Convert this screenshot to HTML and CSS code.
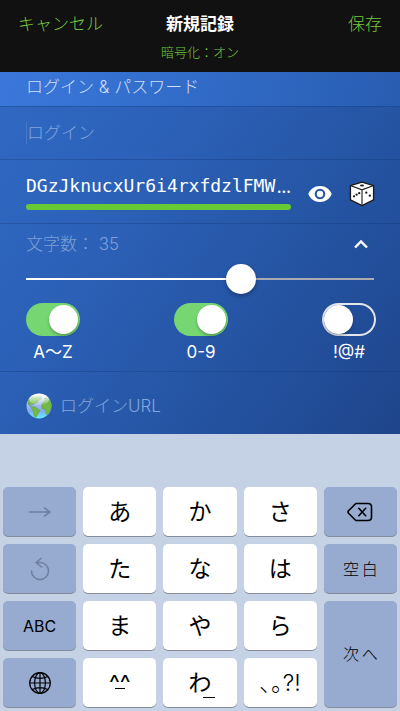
FILE: index.html
```html
<!DOCTYPE html>
<html lang="ja">
<head>
<meta charset="utf-8">
<meta name="viewport" content="width=device-width, initial-scale=1">
<title>新規記録</title>
<link rel="stylesheet" href="styles.css">
</head>
<body>
<header class="header">
  <div class="nav">
    <button class="nav-btn" type="button">キャンセル</button>
    <h1 class="title">新規記録</h1>
    <button class="nav-btn nav-save" type="button">保存</button>
  </div>
  <p class="status">暗号化：オン</p>
</header>
<main class="form">
  <h2 class="section-title">ログイン &amp; パスワード</h2>
  <div class="row row-login">
    <input class="field field-focus" type="text" placeholder="ログイン" aria-label="ログイン">
  </div>
  <div class="row row-password">
    <div class="password">
      <div class="password-line">
        <input class="password-input" type="text" value="DGzJknucxUr6i4rxfdzlFMW" aria-label="パスワード"><span>…</span>
      </div>
      <div class="strength"></div>
    </div>
    <button class="icon-btn" type="button" aria-label="表示">
      <svg width="24" height="18" viewBox="0 0 24 18"><path fill="#fff" fill-rule="evenodd" d="M12 1C6.500 1 2.200 4.200.3 9c1.900 4.800 6.200 8 11.700 8s9.800-3.200 11.700-8C21.800 4.200 17.500 1 12 1zm0 2.700a5.300 5.300 0 1 1 0 10.600a5.300 5.300 0 0 1 0-10.600z"/><circle cx="12" cy="9" r="3.200" fill="#fff"/></svg>
    </button>
    <button class="icon-btn" type="button" aria-label="生成">
      <svg width="26" height="26" viewBox="0 0 26 26"><path fill="#fff" stroke="#1b1b1b" stroke-width="1.400" stroke-linejoin="round" d="M13 1.200L24.600 4.600V18.900L13 24.700L1.400 18.900V4.600z"/><path fill="none" stroke="#1b1b1b" stroke-width="1.100" d="M1.400 4.600L13 8.800L24.600 4.600M13 8.800V24.700"/><g fill="#1b1b1b"><ellipse cx="13" cy="4.600" rx="2" ry="1"/><circle cx="5" cy="15.300" r="1.150"/><circle cx="7.600" cy="13.700" r="1.150"/><circle cx="10.200" cy="12.200" r="1.150"/><circle cx="17.300" cy="11.700" r="1.150"/><circle cx="20.800" cy="14.700" r="1.150"/></g></svg>
    </button>
  </div>
  <div class="row options">
    <div class="length">
      <label for="length">文字数： 35</label>
      <button class="icon-btn" type="button" aria-label="閉じる">
        <svg width="26" height="20" viewBox="0 0 26 20"><path fill="none" stroke="#fff" stroke-width="2.400" d="M7 13.500L13 7.500L19 13.500"/></svg>
      </button>
    </div>
    <input class="slider" id="length" type="range" min="8" max="51" value="35">
    <div class="switches">
      <label class="switch"><input type="checkbox" checked><span>A〜Z</span></label>
      <label class="switch"><input type="checkbox" checked><span>0-9</span></label>
      <label class="switch"><input type="checkbox"><span>!@#</span></label>
    </div>
  </div>
  <div class="row row-url">
    <svg width="26" height="26" viewBox="0 0 26 26" aria-hidden="true">
      <defs>
        <linearGradient id="sea" x1="0" y1="0" x2="0" y2="1"><stop offset="0" stop-color="#e8eff5"/><stop offset=".4" stop-color="#a5bdf2"/><stop offset=".7" stop-color="#82aaf2"/><stop offset="1" stop-color="#62f2ff"/></linearGradient>
        <linearGradient id="shine" x1="0" y1="0" x2="0" y2="1"><stop offset="0" stop-color="#fff" stop-opacity=".95"/><stop offset="1" stop-color="#fff" stop-opacity=".1"/></linearGradient>
      </defs>
      <circle cx="13" cy="13" r="12.500" fill="url(#sea)"/>
      <path fill="#72b842" stroke="#539b3e" stroke-width=".4" d="M2.500 7L7 3.500L14.500 3L16 5.500L12.500 7.500L11 10L8 10.500L7.500 12L5 11L3 12L6.500 13.500L10 14.500L14 17.500L12 20.500L10 24.500L8 23L7.500 19L5.500 16L5 13.500L2 11zM16.500 10L19.500 7L18 5.500L21 4.500L24.500 9L25.500 13.500L24 18L21.500 22L20 21L19.500 17L16 15.500L15.500 12.500z"/>
      <ellipse cx="13" cy="6.500" rx="10" ry="5.800" fill="url(#shine)"/>
    </svg>
    <input class="field" type="url" placeholder="ログインURL" aria-label="ログインURL">
  </div>
</main>
<section class="keyboard" aria-label="キーボード">
  <button class="key key-dark" type="button" aria-label="次候補"><svg width="24" height="16" viewBox="0 0 24 16"><path class="muted" d="M1.500 8H22M16.500 4L22 8L16.500 12"/></svg></button>
  <button class="key" type="button">あ</button>
  <button class="key" type="button">か</button>
  <button class="key" type="button">さ</button>
  <button class="key key-dark" type="button" aria-label="削除"><svg width="26" height="20" viewBox="0 0 26 20"><path class="ink" d="M8.800 1.500H21Q24.500 1.500 24.500 5V15Q24.500 18.500 21 18.500H8.800L1.500 11.200Q.5 10 1.500 8.800zM11.800 6.300L18.700 13.700M18.700 6.300L11.800 13.700"/></svg></button>
  <button class="key key-dark" type="button" aria-label="戻す"><svg width="20" height="24" viewBox="0 0 20 24"><path class="muted" d="M1.500 14A8.500 8.500 0 1 0 10 5.500H6M11 1.500L6 5.500L11.500 10"/></svg></button>
  <button class="key" type="button">た</button>
  <button class="key" type="button">な</button>
  <button class="key" type="button">は</button>
  <button class="key key-dark key-word" type="button">空&#8201;白</button>
  <button class="key key-dark key-latin" type="button">ABC</button>
  <button class="key" type="button">ま</button>
  <button class="key" type="button">や</button>
  <button class="key" type="button">ら</button>
  <button class="key key-dark key-word key-next" type="button">次&#8201;へ</button>
  <button class="key key-dark" type="button" aria-label="地球儀"><svg width="24" height="24" viewBox="0 0 24 24"><g class="globe"><circle cx="12" cy="12" r="10.300"/><ellipse cx="12" cy="12" rx="5.400" ry="10.300"/><path d="M12 1.700V22.300M1.700 12H22.300M4.200 5.500Q12 9.200 19.800 5.500M4.200 18.500Q12 14.800 19.800 18.500"/></g></svg></button>
  <button class="key key-face" type="button">^^</button>
  <button class="key key-wa" type="button">わ</button>
  <button class="key key-marks" type="button">､｡?!</button>
</section>
</body>
</html>
```
FILE: styles.css
```css
* {
  box-sizing: border-box;
}

body {
  margin: 0;
  min-height: 100vh;
  display: flex;
  flex-direction: column;
  background: #c5d2e5;
  font-family: Inter, "Noto Sans CJK JP", sans-serif;
  font-size: 17px;
  line-height: 24px;
}

button,
input {
  margin: 0;
  padding: 0;
  border: 0;
  background: none;
  color: inherit;
  font: inherit;
  outline: none;
}

svg {
  display: block;
}

.header {
  height: 72px;
  padding: 12px 18px 0;
  background: #111;
  color: #78c83c;
}

.nav {
  display: grid;
  grid-template-columns: 1fr auto 1fr;
}

.nav-btn {
  justify-self: start;
  font-weight: 300;
}

.nav-save {
  justify-self: end;
}

.title {
  margin: 0;
  color: #fff;
  font-size: 17px;
  font-weight: 700;
}

.status {
  margin: 6px 0 0;
  font-size: 13px;
  font-weight: 300;
  line-height: 20px;
  text-align: center;
}

.form {
  background: linear-gradient(125deg, #3069c4 0%, #2b60b6 35%, #2554a3 65%, #1e458b 100%);
  color: #fff;
}

.section-title {
  margin: 0;
  height: 34px;
  padding: 3px 26px 0;
  background: linear-gradient(100deg, rgba(62, 126, 228, 0.7), rgba(42, 98, 186, 0.6));
  color: #cfdff7;
  font-size: 17px;
  font-weight: 300;
}

.row {
  display: flex;
  border-top: 1px solid rgba(20, 55, 120, 0.35);
  padding: 0 26px;
}

.row-login {
  height: 53px;
  align-items: center;
}

.field {
  flex: 1;
  min-width: 0;
  height: 22px;
  font-weight: 300;
}

.field::placeholder {
  color: #82a5dc;
  opacity: 1;
}

.field-focus {
  border-left: 1px solid #4778cb;
}

.row-password {
  height: 64px;
  align-items: flex-end;
  gap: 17px;
  padding-right: 25px;
  padding-bottom: 13px;
}

.icon-btn {
  display: grid;
  place-items: center;
  height: 32px;
}

.password {
  flex: 1;
  min-width: 0;
}

.password-line {
  display: flex;
  font-family: "DejaVu Sans Mono", monospace;
  font-size: 18px;
}

.password-line span {
  font-family: "Noto Sans", sans-serif;
}

.password-input {
  flex: 1;
  min-width: 0;
}

.strength {
  height: 6px;
  margin-top: 6px;
  border-radius: 3px;
  background: #67c935;
}

.options {
  height: 148px;
  flex-direction: column;
}

.length {
  display: flex;
  align-items: center;
  justify-content: space-between;
  height: 40px;
  color: #7d9fd6;
  font-weight: 300;
}

.slider {
  appearance: none;
  width: 100%;
  height: 30px;
  background: linear-gradient(90deg, #fff 62%, #a9abb0 62%) center / 100% 2px no-repeat;
}

.slider::-webkit-slider-thumb {
  appearance: none;
  width: 30px;
  height: 30px;
  border-radius: 50%;
  background: #fff;
  box-shadow: 0 2px 4px rgba(0, 0, 0, 0.3);
}

.switches {
  display: flex;
  justify-content: space-between;
  margin: 9px -2px 0 0;
}

.switch {
  display: flex;
  flex-direction: column;
  align-items: center;
  width: 54px;
  gap: 4px;
}

.switch input {
  appearance: none;
  display: flex;
  width: 54px;
  height: 33px;
  padding: 2px;
  border-radius: 17px;
  box-shadow: inset 0 0 0 2px #e4e6ee;
}

.switch input::before {
  content: "";
  width: 29px;
  height: 29px;
  border-radius: 50%;
  background: #fff;
  box-shadow: 0 2px 3px rgba(0, 0, 0, 0.25);
}

.switch input:checked {
  justify-content: flex-end;
  background: #76d672;
  box-shadow: none;
}

.row-url {
  height: 63px;
  align-items: center;
  gap: 8px;
  padding-top: 6px;
}

.row-url svg {
  flex: none;
}

.keyboard {
  display: grid;
  grid-template-columns: repeat(5, 1fr);
  grid-auto-rows: 49px;
  gap: 8px 7px;
  padding: 53px 3px 4px;
}

.key {
  display: grid;
  place-items: center;
  position: relative;
  border-radius: 5px;
  background: #fff;
  box-shadow: 0 1px 0 #858d9c;
  color: #000;
  font-size: 23px;
  line-height: 32px;
}

.key-dark {
  background: #96abcf;
}

.key-latin {
  font-size: 16px;
}

.key-word {
  font-size: 16px;
  font-weight: 300;
}

.key-next {
  grid-row: span 2;
}

.key-face {
  font-weight: 400;
}

.key-marks {
  font-weight: 300;
}

.key-face::after,
.key-wa::after {
  content: "";
  position: absolute;
  height: 1px;
  background: #000;
}

.key-face::after {
  left: calc(50% - 5px);
  bottom: 18px;
  width: 10px;
}

.key-wa::after {
  left: calc(50% + 3px);
  bottom: 9px;
  width: 12px;
}

.muted,
.ink,
.globe {
  fill: none;
  stroke: #000;
  stroke-width: 1.6;
  stroke-linecap: round;
  stroke-linejoin: round;
}

.muted {
  stroke: #6f80a0;
}

.globe {
  stroke-width: 1.2;
}
```
